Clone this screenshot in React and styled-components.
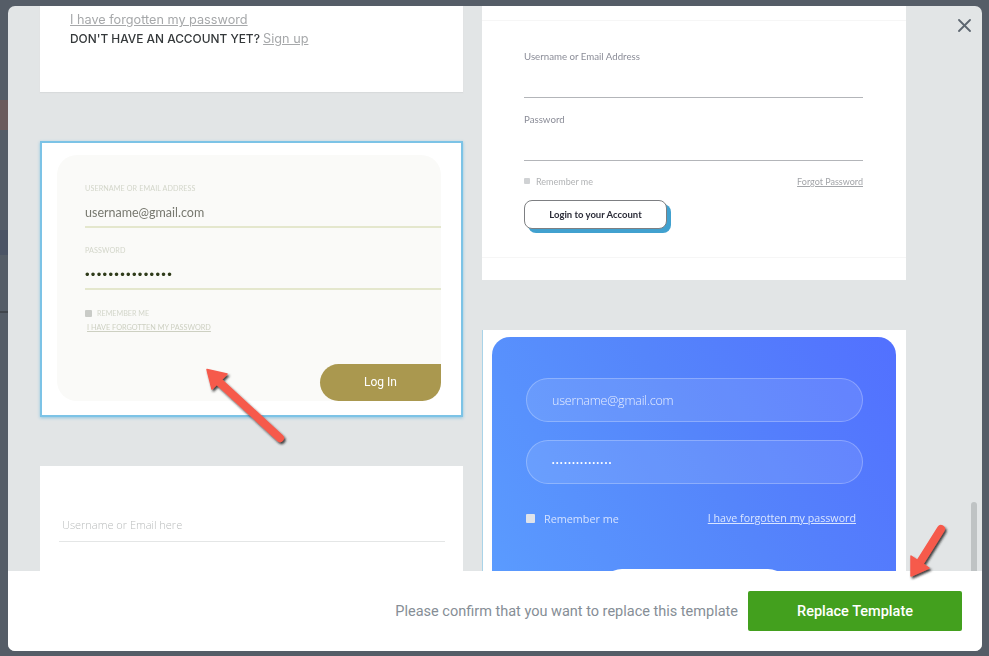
import React from 'react';
import styled, { createGlobalStyle } from 'styled-components';

const GlobalStyle = createGlobalStyle`
  html, body, #root {
    margin: 0;
    height: 100%;
    overflow: hidden;
  }
  * {
    box-sizing: border-box;
  }
`;

const Backdrop = styled.div`
  height: 656px;
  padding: 6px 7px 5px 8px;
  background-color: #555d67;
  background-image: linear-gradient(
    to bottom,
    #555d67 0 100px,
    #6a5b5c 100px 130px,
    #555d67 130px 230px,
    #4b5465 230px 255px,
    #555d67 255px 311px,
    #41464c 311px 313px,
    #555d67 313px
  );
  background-size: 8px 100%;
  background-repeat: no-repeat;
`;

const Modal = styled.div`
  position: relative;
  display: flex;
  flex-direction: column;
  height: 100%;
  border-radius: 7px;
  overflow: hidden;
  background: #e2e5e6;
`;

const Gallery = styled.div`
  position: relative;
  flex: 1;
  min-height: 0;
  overflow: hidden;
  display: grid;
  grid-template-columns: 423px 424px;
  column-gap: 19px;
  padding-left: 32px;
`;

const Column = styled.div`
  display: flex;
  flex-direction: column;
  gap: ${p => p.$gap}px;
`;

const Card = styled.div`
  flex: none;
  height: ${p => (p.$height ? `${p.$height}px` : 'auto')};
  background: #fff;
  overflow: hidden;
  filter: blur(0.4px);
`;

/* card 1: cut off by the scroll position */
const AccountCard = styled(Card)`
  padding: 4px 0 0 30px;
  font-family: Inter, "Liberation Sans", sans-serif;
  font-size: 11.9px;
  font-weight: 500;
  line-height: 19px;
  color: #34383a;
  box-shadow: 0 1px 1px #d8dbdc;
`;

const MutedLink = styled.a`
  color: #a6a8aa;
  font-weight: 400;
  text-decoration: underline;
  font-size: 12.7px;
`;

const AccountLine = styled.div`
  white-space: nowrap;
`;

/* card 2: selected template */
const SelectedCard = styled(Card)`
  padding: 12px 0 0 15px;
  border: 2px solid #7cc3e6;
  box-shadow: 0 1px 3px #8fc6e0;
  font-family: Lato, "Open Sans", sans-serif;
`;

const SoftPanel = styled.div`
  display: flex;
  flex-direction: column;
  width: 384px;
  height: 246px;
  padding-top: 29px;
  padding-left: 28px;
  border-radius: 20px;
  background: #fafaf8;
`;

const TinyLabel = styled.div`
  height: 10px;
  line-height: 10px;
  font-size: 7.2px;
  letter-spacing: 0.1px;
  color: #d3d6ca;
  text-transform: uppercase;
  margin-top: ${p => p.$top || 0}px;
`;

const SoftValue = styled.div`
  height: 27px;
  margin-top: 7px;
  border-bottom: 2px solid #e4e7cd;
  line-height: 24px;
  font-size: 12.5px;
  color: #77786f;
`;

const DarkDots = styled(SoftValue)`
  font-family: "Liberation Sans", sans-serif;
  font-size: 13px;
  letter-spacing: 1.32px;
  color: #2f3b1a;
`;

const TinyRow = styled.div`
  display: flex;
  align-items: center;
  gap: 5px;
  height: 10px;
  margin-top: 18px;
  font-size: 7.2px;
  color: #d3d6ca;
`;

const GreyBox = styled.span`
  flex: none;
  width: ${p => p.$size}px;
  height: ${p => p.$size}px;
  border-radius: 1px;
  background: ${p => p.$color};
`;

const TinyLink = styled.a`
  display: block;
  height: 10px;
  margin: 5px 0 0 2px;
  line-height: 10px;
  font-size: 7.3px;
  color: #cdd0c2;
  text-decoration: underline;
`;

const GoldButton = styled.div`
  align-self: flex-end;
  width: 121px;
  height: 37px;
  margin-top: auto;
  border-radius: 19px 0 19px 19px;
  background: #aa984f;
  color: #fff;
  text-align: center;
  line-height: 37px;
  font-family: Roboto, sans-serif;
  font-size: 12px;
`;

/* card 3 */
const PlainCard = styled(Card)`
  padding: 50px 18px 0 19px;
  height: 200px;
`;

const Placeholder = styled.div`
  height: 26px;
  padding-left: 3px;
  border-bottom: 1px solid #e4e6e6;
  line-height: 18px;
  font-family: "Open Sans", sans-serif;
  font-weight: 300;
  font-size: 11px;
  color: #b9bcbc;
`;

/* right column, card 1 */
const OutlineCard = styled(Card)`
  font-family: Lato, "Open Sans", sans-serif;
`;

const HairRule = styled.div`
  height: 1px;
  background: #f6f6f6;
  margin-top: ${p => p.$top}px;
`;

const OutlineForm = styled.div`
  padding: 29px 43px 0 42px;
`;

const OutlineLabel = styled.div`
  height: 12px;
  margin-top: ${p => p.$top || 0}px;
  line-height: 12px;
  font-size: 9.7px;
  color: #8b8d98;
`;

const OutlineInput = styled.div`
  height: 36px;
  border-bottom: 1px solid #b3b5b9;
`;

const SpreadRow = styled.div`
  display: flex;
  align-items: center;
  justify-content: space-between;
  height: 12px;
  margin-top: 14px;
  font-size: 9px;
  color: #b0b2b4;
`;

const CheckLabel = styled.span`
  display: flex;
  align-items: center;
  gap: ${p => p.$gap || 6}px;
`;

const OutlineLink = styled.a`
  color: #a3a5a9;
  text-decoration: underline;
`;

const OutlineButton = styled.div`
  width: 143px;
  height: 29px;
  margin-top: 13px;
  border: 1px solid #7d7f82;
  border-radius: 8px;
  box-shadow: 4px 4px 0 #41a1cf;
  background: #fff;
  text-align: center;
  line-height: 27px;
  font-size: 9.5px;
  font-weight: 700;
  color: #2b2c38;
`;

/* right column, card 2 */
const GradientCard = styled(Card)`
  height: 300px;
  padding: 7px 0 0 9px;
  border-left: 1px solid #a9d3e8;
  font-family: "Open Sans", sans-serif;
`;

const GradientPanel = styled.div`
  width: 404px;
  height: 300px;
  padding: 41px 33px 0 34px;
  border-radius: 18px;
  background: linear-gradient(60deg, #5b9eff 0%, #5585fb 55%, #5270ff 100%);
`;

const PillField = styled.div`
  height: 44px;
  margin-bottom: 18px;
  padding-left: 25px;
  border: 1px solid rgba(255, 255, 255, 0.25);
  border-radius: 22px;
  background: rgba(255, 255, 255, 0.1);
  line-height: 43px;
  font-size: 12.5px;
  font-weight: 300;
  letter-spacing: -0.2px;
  color: #e6edff;
`;

const PillDots = styled(PillField)`
  font-family: "Liberation Sans", sans-serif;
  font-size: 7px;
  letter-spacing: 1.6px;
  color: #fff;
`;

const GradientRow = styled.div`
  display: flex;
  align-items: center;
  justify-content: space-between;
  height: 14px;
  margin-top: 27px;
  padding-right: 7px;
  font-size: 10.8px;
  color: #d3e1ff;
`;

const GradientLink = styled.a`
  font-size: 10.7px;
  color: #d9e5ff;
  text-decoration: underline;
`;

const WhitePill = styled.div`
  width: 190px;
  height: 44px;
  margin: 44px auto 0;
  border-radius: 22px;
  background: #fff;
`;

const ScrollThumb = styled.div`
  position: absolute;
  right: 5px;
  bottom: 0;
  width: 6px;
  height: 69px;
  border-radius: 3px 3px 0 0;
  background: #bfc3c4;
`;

const CloseButton = styled.button`
  position: absolute;
  top: 13px;
  right: 11px;
  width: 13px;
  height: 13px;
  padding: 0;
  border: 0;
  background: none;
  color: #5d6670;
  display: flex;
`;

const Footer = styled.div`
  flex: none;
  height: 80px;
  display: flex;
  align-items: center;
  justify-content: flex-end;
  gap: 10px;
  padding-right: 20px;
  background: #fff;
  font-family: Roboto, "Open Sans", sans-serif;
`;

const ConfirmText = styled.span`
  font-size: 14.5px;
  color: #868e96;
`;

const ReplaceButton = styled.button`
  width: 214px;
  height: 40px;
  border: 0;
  border-radius: 2px;
  background: #43a01e;
  color: #fff;
  font-family: inherit;
  font-size: 14.5px;
  font-weight: 500;
`;

const ArrowLayer = styled.svg`
  position: absolute;
  top: 0;
  left: 0;
  pointer-events: none;
`;

function Arrows() {
  return (
    <ArrowLayer width="989" height="656" viewBox="0 0 989 656">
      <defs>
        <filter id="arrowShadow" x="-30%" y="-30%" width="160%" height="160%">
          <feDropShadow dx="1.5" dy="2" stdDeviation="1" floodColor="#1f1f1f" floodOpacity="0.85" />
        </filter>
      </defs>
      <g filter="url(#arrowShadow)" fill="#f65a4c" stroke="#f65a4c" strokeLinecap="round" strokeLinejoin="round">
        <line x1="217" y1="380" x2="280" y2="438" strokeWidth="8" />
        <polygon points="207,369.5 227,374 212,389" strokeWidth="1.5" />
        <line x1="919" y1="564" x2="941" y2="529" strokeWidth="8" />
        <polygon points="911,576 911,556 929,568" strokeWidth="1.5" />
      </g>
    </ArrowLayer>
  );
}

export default function App() {
  return (
    <>
      <GlobalStyle />
      <Backdrop>
        <Modal>
          <Gallery>
            <Column $gap={49}>
              <AccountCard $height={86}>
                <AccountLine><MutedLink>I have forgotten my password</MutedLink></AccountLine>
                <AccountLine>DON'T HAVE AN ACCOUNT YET? <MutedLink>Sign up</MutedLink></AccountLine>
              </AccountCard>
              <SelectedCard $height={276}>
                <SoftPanel>
                  <TinyLabel>Username or Email Address</TinyLabel>
                  <SoftValue>username@gmail.com</SoftValue>
                  <TinyLabel $top={18}>Password</TinyLabel>
                  <DarkDots>•••••••••••••••</DarkDots>
                  <TinyRow>
                    <GreyBox $size={7} $color="#c9cbc7" />
                    REMEMBER ME
                  </TinyRow>
                  <TinyLink>I HAVE FORGOTTEN MY PASSWORD</TinyLink>
                  <GoldButton>Log In</GoldButton>
                </SoftPanel>
              </SelectedCard>
              <PlainCard>
                <Placeholder>Username or Email here</Placeholder>
              </PlainCard>
            </Column>
            <Column $gap={50}>
              <OutlineCard $height={274}>
                <HairRule $top={14} />
                <OutlineForm>
                  <OutlineLabel>Username or Email Address</OutlineLabel>
                  <OutlineInput />
                  <OutlineLabel $top={15}>Password</OutlineLabel>
                  <OutlineInput />
                  <SpreadRow>
                    <CheckLabel>
                      <GreyBox $size={6} $color="#d0d2d4" />
                      Remember me
                    </CheckLabel>
                    <OutlineLink>Forgot Password</OutlineLink>
                  </SpreadRow>
                  <OutlineButton>Login to your Account</OutlineButton>
                </OutlineForm>
                <HairRule $top={28} />
              </OutlineCard>
              <GradientCard>
                <GradientPanel>
                  <PillField>username@gmail.com</PillField>
                  <PillDots>•••••••••••••••</PillDots>
                  <GradientRow>
                    <CheckLabel $gap={9}>
                      <GreyBox $size={9} $color="#dfe3ea" />
                      Remember me
                    </CheckLabel>
                    <GradientLink>I have forgotten my password</GradientLink>
                  </GradientRow>
                  <WhitePill />
                </GradientPanel>
              </GradientCard>
            </Column>
            <ScrollThumb />
          </Gallery>
          <Footer>
            <ConfirmText>Please confirm that you want to replace this template</ConfirmText>
            <ReplaceButton>Replace Template</ReplaceButton>
          </Footer>
          <CloseButton aria-label="Close">
            <svg width="13" height="13" viewBox="0 0 13 13" stroke="currentColor" strokeWidth="1.8" strokeLinecap="round">
              <line x1="1" y1="1" x2="12" y2="12" />
              <line x1="12" y1="1" x2="1" y2="12" />
            </svg>
          </CloseButton>
        </Modal>
        <Arrows />
      </Backdrop>
    </>
  );
}
